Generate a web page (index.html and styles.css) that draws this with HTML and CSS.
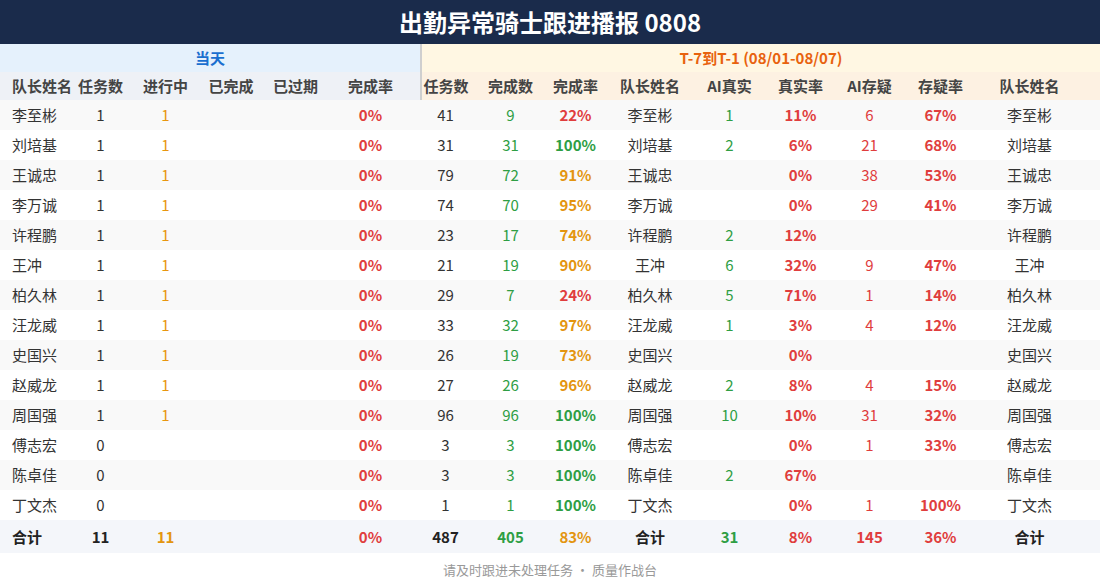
FILE: index.html
```html
<!DOCTYPE html>
<html lang="zh">
<head>
<meta charset="utf-8">
<title>出勤异常骑士跟进播报 0808</title>
<link rel="stylesheet" href="styles.css">
</head>
<body>
<div class="page">
  <header class="title-bar">出勤异常骑士跟进播报 0808</header>
  <div class="group-row">
    <div class="group today">当天</div>
    <div class="group week">T-7到T-1 (08/01-08/07)</div>
  </div>
  <div class="row head">
    <div class="c name-l">队长姓名</div>
    <div class="c">任务数</div>
    <div class="c">进行中</div>
    <div class="c">已完成</div>
    <div class="c">已过期</div>
    <div class="c c6">完成率</div>
    <div class="c first-r">任务数</div>
    <div class="c">完成数</div>
    <div class="c">完成率</div>
    <div class="c">队长姓名</div>
    <div class="c">AI真实</div>
    <div class="c">真实率</div>
    <div class="c">AI存疑</div>
    <div class="c">存疑率</div>
    <div class="c">队长姓名</div>
    <div class="c"></div>
  </div>

  <div class="row odd"><div class="c name-l">李至彬</div><div class="c">1</div><div class="c org">1</div><div class="c"></div><div class="c"></div><div class="c c6 red b">0%</div><div class="c">41</div><div class="c grn">9</div><div class="c red b">22%</div><div class="c">李至彬</div><div class="c grn">1</div><div class="c red b">11%</div><div class="c red">6</div><div class="c red b">67%</div><div class="c">李至彬</div><div class="c"></div></div>
  <div class="row"><div class="c name-l">刘培基</div><div class="c">1</div><div class="c org">1</div><div class="c"></div><div class="c"></div><div class="c c6 red b">0%</div><div class="c">31</div><div class="c grn">31</div><div class="c grn b">100%</div><div class="c">刘培基</div><div class="c grn">2</div><div class="c red b">6%</div><div class="c red">21</div><div class="c red b">68%</div><div class="c">刘培基</div><div class="c"></div></div>
  <div class="row odd"><div class="c name-l">王诚忠</div><div class="c">1</div><div class="c org">1</div><div class="c"></div><div class="c"></div><div class="c c6 red b">0%</div><div class="c">79</div><div class="c grn">72</div><div class="c orgb b">91%</div><div class="c">王诚忠</div><div class="c grn"></div><div class="c red b">0%</div><div class="c red">38</div><div class="c red b">53%</div><div class="c">王诚忠</div><div class="c"></div></div>
  <div class="row"><div class="c name-l">李万诚</div><div class="c">1</div><div class="c org">1</div><div class="c"></div><div class="c"></div><div class="c c6 red b">0%</div><div class="c">74</div><div class="c grn">70</div><div class="c orgb b">95%</div><div class="c">李万诚</div><div class="c grn"></div><div class="c red b">0%</div><div class="c red">29</div><div class="c red b">41%</div><div class="c">李万诚</div><div class="c"></div></div>
  <div class="row odd"><div class="c name-l">许程鹏</div><div class="c">1</div><div class="c org">1</div><div class="c"></div><div class="c"></div><div class="c c6 red b">0%</div><div class="c">23</div><div class="c grn">17</div><div class="c orgb b">74%</div><div class="c">许程鹏</div><div class="c grn">2</div><div class="c red b">12%</div><div class="c red"></div><div class="c red b"></div><div class="c">许程鹏</div><div class="c"></div></div>
  <div class="row"><div class="c name-l">王冲</div><div class="c">1</div><div class="c org">1</div><div class="c"></div><div class="c"></div><div class="c c6 red b">0%</div><div class="c">21</div><div class="c grn">19</div><div class="c orgb b">90%</div><div class="c">王冲</div><div class="c grn">6</div><div class="c red b">32%</div><div class="c red">9</div><div class="c red b">47%</div><div class="c">王冲</div><div class="c"></div></div>
  <div class="row odd"><div class="c name-l">柏久林</div><div class="c">1</div><div class="c org">1</div><div class="c"></div><div class="c"></div><div class="c c6 red b">0%</div><div class="c">29</div><div class="c grn">7</div><div class="c red b">24%</div><div class="c">柏久林</div><div class="c grn">5</div><div class="c red b">71%</div><div class="c red">1</div><div class="c red b">14%</div><div class="c">柏久林</div><div class="c"></div></div>
  <div class="row"><div class="c name-l">汪龙威</div><div class="c">1</div><div class="c org">1</div><div class="c"></div><div class="c"></div><div class="c c6 red b">0%</div><div class="c">33</div><div class="c grn">32</div><div class="c orgb b">97%</div><div class="c">汪龙威</div><div class="c grn">1</div><div class="c red b">3%</div><div class="c red">4</div><div class="c red b">12%</div><div class="c">汪龙威</div><div class="c"></div></div>
  <div class="row odd"><div class="c name-l">史国兴</div><div class="c">1</div><div class="c org">1</div><div class="c"></div><div class="c"></div><div class="c c6 red b">0%</div><div class="c">26</div><div class="c grn">19</div><div class="c orgb b">73%</div><div class="c">史国兴</div><div class="c grn"></div><div class="c red b">0%</div><div class="c red"></div><div class="c red b"></div><div class="c">史国兴</div><div class="c"></div></div>
  <div class="row"><div class="c name-l">赵威龙</div><div class="c">1</div><div class="c org">1</div><div class="c"></div><div class="c"></div><div class="c c6 red b">0%</div><div class="c">27</div><div class="c grn">26</div><div class="c orgb b">96%</div><div class="c">赵威龙</div><div class="c grn">2</div><div class="c red b">8%</div><div class="c red">4</div><div class="c red b">15%</div><div class="c">赵威龙</div><div class="c"></div></div>
  <div class="row odd"><div class="c name-l">周国强</div><div class="c">1</div><div class="c org">1</div><div class="c"></div><div class="c"></div><div class="c c6 red b">0%</div><div class="c">96</div><div class="c grn">96</div><div class="c grn b">100%</div><div class="c">周国强</div><div class="c grn">10</div><div class="c red b">10%</div><div class="c red">31</div><div class="c red b">32%</div><div class="c">周国强</div><div class="c"></div></div>
  <div class="row"><div class="c name-l">傅志宏</div><div class="c">0</div><div class="c org"></div><div class="c"></div><div class="c"></div><div class="c c6 red b">0%</div><div class="c">3</div><div class="c grn">3</div><div class="c grn b">100%</div><div class="c">傅志宏</div><div class="c grn"></div><div class="c red b">0%</div><div class="c red">1</div><div class="c red b">33%</div><div class="c">傅志宏</div><div class="c"></div></div>
  <div class="row odd"><div class="c name-l">陈卓佳</div><div class="c">0</div><div class="c org"></div><div class="c"></div><div class="c"></div><div class="c c6 red b">0%</div><div class="c">3</div><div class="c grn">3</div><div class="c grn b">100%</div><div class="c">陈卓佳</div><div class="c grn">2</div><div class="c red b">67%</div><div class="c red"></div><div class="c red b"></div><div class="c">陈卓佳</div><div class="c"></div></div>
  <div class="row"><div class="c name-l">丁文杰</div><div class="c">0</div><div class="c org"></div><div class="c"></div><div class="c"></div><div class="c c6 red b">0%</div><div class="c">1</div><div class="c grn">1</div><div class="c grn b">100%</div><div class="c">丁文杰</div><div class="c grn"></div><div class="c red b">0%</div><div class="c red">1</div><div class="c red b">100%</div><div class="c">丁文杰</div><div class="c"></div></div>

  <div class="row total"><div class="c name-l">合计</div><div class="c">11</div><div class="c orgb">11</div><div class="c"></div><div class="c"></div><div class="c c6 red">0%</div><div class="c">487</div><div class="c grn">405</div><div class="c orgb">83%</div><div class="c">合计</div><div class="c grn">31</div><div class="c red">8%</div><div class="c red">145</div><div class="c red">36%</div><div class="c">合计</div><div class="c"></div></div>

  <footer class="foot">请及时跟进未处理任务 · 质量作战台</footer>
</div>
</body>
</html>
```

FILE: styles.css
```css
* { box-sizing: border-box; }
html, body {
  margin: 0;
  padding: 0;
  background: #ffffff;
}
body {
  font-family: "Noto Sans CJK SC", "Noto Sans", sans-serif;
  font-size: 15px;
  color: #333333;
}
.page {
  width: 1100px;
}
.title-bar {
  height: 44px;
  line-height: 44px;
  background: #1a2b4b;
  color: #ffffff;
  font-size: 24px;
  font-weight: 700;
  text-align: center;
}
.group-row {
  display: grid;
  grid-template-columns: 420px 1fr;
  height: 28px;
}
.group {
  line-height: 28px;
  text-align: center;
  font-weight: 700;
  font-size: 15px;
}
.today {
  background: #e5f1fc;
  color: #1a6fcf;
}
.week {
  background: #fff7e3;
  color: #e8620e;
  border-left: 2px solid #cfcfcf;
}
.row {
  display: grid;
  grid-template-columns: 68px 65px 65px 66px 63px 93px 51px 79px 51px 98px 61px 81px 57px 85px 93px 1fr;
  height: 30px;
  align-items: center;
}
.row.odd { background: #f9f9f9; }
.row.head {
  height: 28px;
  background: linear-gradient(to right, #eef1f6 0, #eef1f6 420px, #fdf1e2 420px, #fdf1e2 100%);
}
.c {
  text-align: center;
  white-space: nowrap;
  line-height: 30px;
}
.head .c {
  line-height: 28px;
  height: 28px;
  font-weight: 700;
  color: #444444;
}
.head .first-r {
  border-left: 2px solid #cfcfcf;
  text-indent: -1px;
}
.name-l {
  text-align: left;
  padding-left: 12px;
  overflow: visible;
}
.c6 { padding-right: 6px; }
.b { font-weight: 700; }
.red { color: #e03d3d; }
.grn { color: #2e9e44; }
.org { color: #e8960f; }
.orgb { color: #e3950f; font-weight: 700; }
.row.total {
  height: 33px;
  background: #f4f6fa;
  font-weight: 700;
  color: #222222;
}
.row.total .c { line-height: 33px; }
.foot {
  height: 33px;
  line-height: 33px;
  text-align: center;
  font-size: 13px;
  color: #999999;
}
```
